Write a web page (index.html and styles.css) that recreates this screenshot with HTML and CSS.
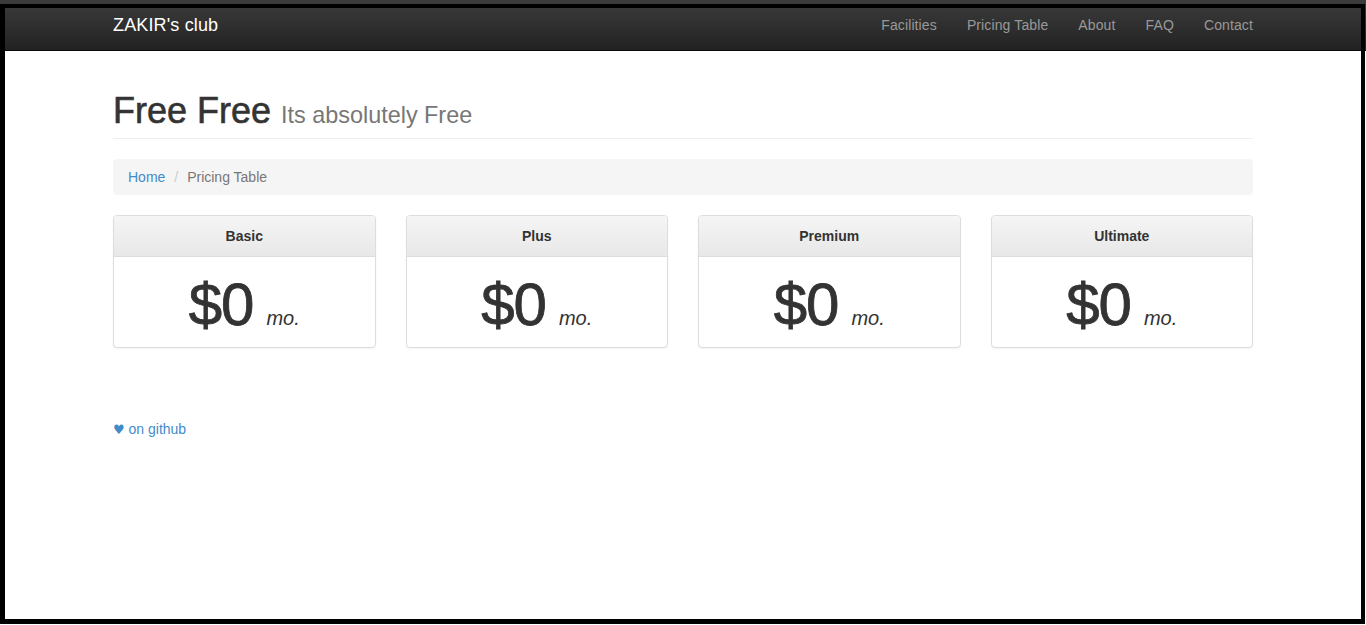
FILE: index.html
```html
<!DOCTYPE html>
<html lang="en">
<head>
  <meta charset="UTF-8" />
  <meta name="viewport" content="width=device-width, initial-scale=1.0"/>
  <title>ZAKIR's club - Pricing Table</title>
  <link rel="stylesheet" href="styles.css">
</head>
<body>
  <nav class="navbar">
    <div class="container navbar-inner">
      <a class="brand" href="#">ZAKIR's club</a>
      <ul class="nav">
        <li><a href="#">Facilities</a></li>
        <li><a href="#">Pricing Table</a></li>
        <li><a href="#">About</a></li>
        <li><a href="#">FAQ</a></li>
        <li><a href="#">Contact</a></li>
      </ul>
    </div>
  </nav>

  <div class="container">
    <h1 class="page-header"><span class="title">Free Free</span> <small>Its absolutely Free</small></h1>

    <ol class="breadcrumb">
      <li><a href="#">Home</a></li>
      <li class="active">Pricing Table</li>
    </ol>

    <div class="plans">
      <div class="panel">
        <div class="panel-heading">Basic</div>
        <div class="panel-body"><span class="price">$0</span><span class="per">mo.</span></div>
      </div>
      <div class="panel">
        <div class="panel-heading">Plus</div>
        <div class="panel-body"><span class="price">$0</span><span class="per">mo.</span></div>
      </div>
      <div class="panel">
        <div class="panel-heading">Premium</div>
        <div class="panel-body"><span class="price">$0</span><span class="per">mo.</span></div>
      </div>
      <div class="panel">
        <div class="panel-heading">Ultimate</div>
        <div class="panel-body"><span class="price">$0</span><span class="per">mo.</span></div>
      </div>
    </div>

    <footer class="footer">
      <a href="#"><span class="heart">&#9829;</span> on github</a>
    </footer>
  </div>

  <!-- window frame drawn over the page -->
  <div class="frame"></div>
</body>
</html>
```

FILE: styles.css
```css
* {
  box-sizing: border-box;
}

body {
  margin: 0;
  font-family: 'Liberation Sans', Arial, sans-serif;
  font-size: 14px;
  line-height: 20px;
  color: #333;
  background: #fff;
}

a {
  color: #428bca;
  text-decoration: none;
}

.container {
  width: 1170px;
  margin: 0 auto;
  padding: 0 15px;
}

/* navbar */
.navbar {
  height: 51px;
  background: linear-gradient(to bottom, #3c3c3c 0%, #222 100%);
  border-bottom: 1px solid #080808;
}

.navbar-inner {
  display: flex;
  justify-content: space-between;
  align-items: center;
  height: 50px;
}

.brand {
  color: #fff;
  font-size: 18px;
  line-height: 20px;
  letter-spacing: 0.15px;
}

.nav {
  display: flex;
  list-style: none;
  margin: 0 -15px 0 0;
  padding: 0;
}

.nav a {
  display: block;
  padding: 15px;
  color: #999;
  letter-spacing: 0.12px;
}

/* header */
.page-header {
  margin: 40px 0 20px;
  padding-bottom: 2px;
  border-bottom: 1px solid #eee;
  font-size: 36px;
  line-height: 39.6px;
  font-weight: 500;
  color: #333;
}

.page-header .title {
  -webkit-text-stroke: 0.6px #333;
}

.page-header small {
  font-size: 65%;
  font-weight: normal;
  color: #777;
}

.breadcrumb {
  display: flex;
  list-style: none;
  margin: 0 0 20px;
  padding: 8px 15px;
  background: #f5f5f5;
  border-radius: 4px;
}

.breadcrumb li + li::before {
  content: "/\00a0";
  padding: 0 5px 0 9px;
  color: #ccc;
}

.breadcrumb .active {
  color: #777;
}

/* pricing panels */
.plans {
  display: grid;
  grid-template-columns: repeat(4, 1fr);
  gap: 30px;
  margin-bottom: 20px;
}

.panel {
  border: 1px solid #ddd;
  border-radius: 4px;
  background: #fff;
  box-shadow: 0 1px 2px rgba(0, 0, 0, 0.05);
  overflow: hidden;
}

.panel-heading {
  padding: 10px 15px;
  border-bottom: 1px solid #ddd;
  background: linear-gradient(to bottom, #f5f5f5 0%, #e8e8e8 100%);
  text-align: center;
  font-weight: bold;
}

.panel-body {
  padding: 15px 15px 9px;
  text-align: center;
  line-height: 66px;
  height: 90px;
}

.price {
  font-size: 60px;
  line-height: 66px;
  letter-spacing: -1px;
  -webkit-text-stroke: 0.8px #333;
}

.per {
  margin-left: 13px;
  font-size: 20px;
  line-height: 20px;
  font-style: italic;
}

.footer {
  margin-top: 71px;
}

.heart {
  font-family: 'DejaVu Sans', sans-serif;
  font-size: 13px;
}

/* black window border of the screenshot */
.frame {
  position: fixed;
  left: 0;
  top: 4px;
  width: 1365px;
  height: 620px;
  border-style: solid;
  border-color: #000;
  border-width: 4px 4px 5px 5px;
  pointer-events: none;
}
```
